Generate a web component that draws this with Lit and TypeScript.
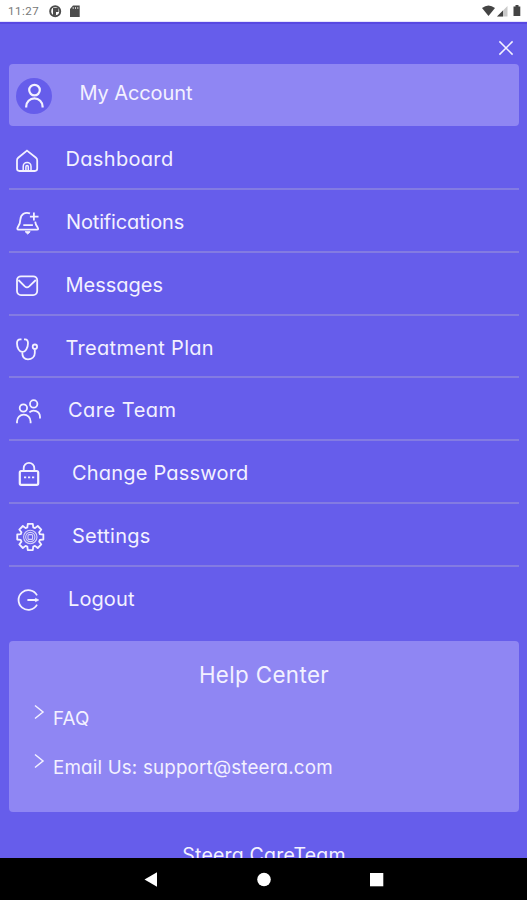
import { LitElement, html, css, svg } from "lit";
import { customElement } from "lit/decorators.js";
import { styleMap } from "lit/directives/style-map.js";

const gearPath = (() => {
  const pts: string[] = [];
  for (let i = 0; i < 8; i++) {
    const base = (i * Math.PI) / 4;
    for (const [r, d] of [[10, -0.3], [13.3, -0.19], [13.3, 0.19], [10, 0.3]]) {
      pts.push(`${(18.3 + r * Math.sin(base + d)).toFixed(2)} ${(17 - r * Math.cos(base + d)).toFixed(2)}`);
    }
  }
  return `M${pts.join("L")}Z`;
})();

const icons = {
  home: svg`<path d="M15 6.6 24 13.8Q25.2 14.8 25.2 16.4V24.6Q25.2 27 22.8 27H7.4Q5 27 5 24.6V16.4Q5 14.8 6.2 13.8Z"/><path d="M11.2 27V22.4a3.9 3.9 0 0 1 7.8 0V27M13.9 27v-4.2a1.2 1.2 0 0 1 2.4 0V27" stroke-width="1.5"/>`,
  bell: svg`<path d="M18 7.4C13 5.6 8.8 8.3 8.4 13.4C8.2 17.4 7.4 19.4 5.8 21.2Q4.6 23.6 6.4 23.6H25Q27 23.6 25.6 21.4C24.2 19.6 23.4 18 23.2 15.6M21.9 6.6v8M17.9 10.6h8.6M11.3 19.2h9.6"/><path d="M13.2 25.7h5L15.7 28z" fill="currentColor" stroke-width="1"/>`,
  mail: svg`<rect x="5" y="7.3" width="20.2" height="18.8" rx="4"/><path d="m6.4 11 6.4 6.4q2.2 2 4.4 0l6.6-6.4"/>`,
  stethoscope: svg`<path d="M9.5 7.3H8.2Q5 7.3 5 11.3C5 16 7.3 20 10.3 20S16 16 16 11.3Q16 7.3 13 7.3H12M10.3 20v1C10.3 25.2 12.4 27.3 16 27.3S22.8 25 22.8 21v-3.8"/><circle cx="22.9" cy="14.7" r="2.2"/>`,
  team: svg`<circle cx="11.4" cy="13" r="3.7"/><circle cx="21.7" cy="8.9" r="3.7"/><path d="M5 28.3V26.5a6.8 6.8 0 0 1 13.6 0V28.3M17.4 17.4a6.3 6.3 0 0 1 10.6 4.4v1.6"/>`,
  lock: svg`<rect x="7.8" y="13" width="18.4" height="13.8" rx="1.5" stroke-width="2.2"/><path d="M11.7 13v-2.8a5.3 5.3 0 0 1 10.6 0V13"/><path d="M12 19.4h2.2M16 19.4h2.2M20 19.4h2.2"/>`,
  gear: svg`<path d="${gearPath}" stroke-linejoin="round"/><g stroke-width="1.1" opacity=".8"><circle cx="18.3" cy="17" r="6.7"/><circle cx="18.3" cy="17" r="4.6"/><rect x="16" y="14.6" width="4.6" height="4.8" rx="1"/></g>`,
  logout: svg`<path d="M25 12.4a9.8 9.8 0 1 0 0 9.2M15.4 17h10"/><path d="m23.4 15.2 3.4 1.8-3.4 1.8z" fill="currentColor" stroke-width=".6"/>`,
};

const items = [
  { icon: icons.home, label: "Dashboard", indent: 17.5, tracking: 0.33 },
  { icon: icons.bell, label: "Notifications", indent: 18, tracking: -0.15 },
  { icon: icons.mail, label: "Messages", indent: 17.5, tracking: 0 },
  { icon: icons.stethoscope, label: "Treatment Plan", indent: 17.5, tracking: 0.3 },
  { icon: icons.team, label: "Care Team", indent: 20, tracking: 0.5 },
  { icon: icons.lock, label: "Change Password", indent: 24, tracking: 0.2 },
  { icon: icons.gear, label: "Settings", indent: 24, tracking: 0.25 },
  { icon: icons.logout, label: "Logout", indent: 20, tracking: 0.1 },
];

@customElement("app-root")
export class AppRoot extends LitElement {
  static styles = css`
    :host {
      display: flex;
      flex-direction: column;
      height: 900px;
      overflow: hidden;
      background: #665deb;
      color: #f3f1ff;
      font-family: Inter, "Open Sans", sans-serif;
      font-feature-settings: "cv11";
      font-size: 20px;
      line-height: 28px;
      white-space: nowrap;
    }
    * { box-sizing: border-box; }
    svg { display: block; flex: none; overflow: visible; }
    .line { fill: none; stroke: currentColor; stroke-width: 1.8; }
    .thin { fill: none; stroke: currentColor; stroke-width: 1.5; }
    .bold { fill: none; stroke: currentColor; stroke-width: 2.2; }
    .status {
      flex: none; height: 22px; background: #fff; color: #777;
      border-bottom: 1px solid #e6e4fb;
      display: flex; align-items: center; padding: 0 5px 0 8px;
      font: 11.5px/20px Roboto, sans-serif; letter-spacing: 0.5px;
    }
    .glyphs { margin-left: 9px; color: #4c4c4c; }
    .signals { margin-left: auto; color: #444; }
    .page {
      flex: 1; min-height: 0; overflow: hidden; display: flex; flex-direction: column;
      padding: 0 8px 0 9px; border-top: 2px solid #5848e2;
    }
    .close { height: 40px; flex: none; display: flex; justify-content: flex-end; padding: 16px 5.5px 0 0; }
    .account {
      flex: none; height: 61.5px; border-radius: 4px; background: #8f86f3;
      display: flex; align-items: center; padding-left: 7px;
    }
    .avatar {
      width: 36px; height: 36px; border-radius: 50%; background: #665deb;
      display: grid; place-items: center; margin-top: 2px;
    }
    .name { margin-left: 27.5px; margin-top: -4px; letter-spacing: -0.1px; }
    .menu { flex: none; padding-top: 1.8px; }
    .row {
      height: 62.8px; display: flex; align-items: center; padding: 3px 0 0 3px;
      border-bottom: 2px solid #837be2;
    }
    .row:last-child { border-color: transparent; }
    .row svg { margin-top: 5px; }
    .help {
      flex: none; height: 170.5px; margin-top: 11.7px; border-radius: 4px; background: #8f86f3;
      padding: 20px 0 0 25px;
    }
    .title { margin: 0 0 0 -25px; text-align: center; font-size: 22.3px; font-weight: 400; line-height: 28px; letter-spacing: 0.4px; }
    .link { display: flex; height: 49px; font-size: 18.8px; line-height: 30px; letter-spacing: 0.17px; }
    .link:first-of-type { margin-top: 15px; }
    .link svg { margin: 0 9px 0 0; }
    .footer { flex: none; margin-top: 29.5px; text-align: center; font-size: 19.5px; letter-spacing: 0.2px; }
    .nav { flex: none; height: 42px; background: #000; color: #fff; display: grid; justify-items: center; }
  `;

  render() {
    return html`
      <header class="status">
        <span>11:27</span>
        <svg class="glyphs" width="34" height="20" viewBox="0 0 34 20">
          <circle cx="7.2" cy="10.2" r="5" fill="none" stroke="currentColor" stroke-width="2"/>
          <path d="M5 7h5.5v4H8v3.5H5z" fill="currentColor"/>
          <path d="M25 4.5h6.7V16H22V8z" fill="currentColor"/>
          <path d="M25.2 6v2M27.5 6v2M29.8 6v2" stroke="#ccc"/>
        </svg>
        <svg class="signals" width="40" height="20" viewBox="0 0 40 20">
          <path d="M0 7q6.5-5 13 0L6.5 15z" fill="currentColor"/>
          <path d="M15 15.5 25.5 5v10.5z" fill="#c9c9c9"/><path d="M15 15.5 21 9.5v6z" fill="currentColor"/>
          <path d="M31.5 5.5h2V4h3v1.5h1.8V15h-6.8z" fill="currentColor"/>
        </svg>
      </header>
      <main class="page">
        <div class="close">
          <svg width="16" height="16" viewBox="0 0 16 16"><path class="thin" d="m1.4 1.4 13.2 13.2M14.6 1.4 1.4 14.6"/></svg>
        </div>
        <div class="account">
          <span class="avatar">
            <svg width="36" height="36" viewBox="0 0 36 36"><g class="bold"><circle cx="18.5" cy="12.1" r="5.3"/><path d="M10.2 29.6v-1a8.2 8.2 0 0 1 16.4 0v1"/></g></svg>
          </span>
          <span class="name">My Account</span>
        </div>
        <nav class="menu">
          ${items.map(i => html`
            <div class="row">
              <svg width="36" height="36" viewBox="0 0 36 36"><g class="line">${i.icon}</g></svg>
              <span style=${styleMap({ marginLeft: `${i.indent}px`, letterSpacing: `${i.tracking}px` })}>${i.label}</span>
            </div>`)}
        </nav>
        <section class="help">
          <h2 class="title">Help Center</h2>
          ${["FAQ", "Email Us: support@steera.com"].map(t => html`
            <div class="link">
              <svg width="10" height="16" viewBox="0 0 10 16"><path class="thin" d="m1 1.5 8 6.5-8 6.5"/></svg>
              <span>${t}</span>
            </div>`)}
        </section>
        <div class="footer">Steera CareTeam</div>
      </main>
      <footer class="nav">
        <svg width="527" height="42" viewBox="0 0 527 42" fill="currentColor">
          <path d="M144.5 21.5 157 14.3v14.4z"/><circle cx="264" cy="21.5" r="6.8"/><rect x="370" y="15" width="13.3" height="13.3"/>
        </svg>
      </footer>`;
  }
}
